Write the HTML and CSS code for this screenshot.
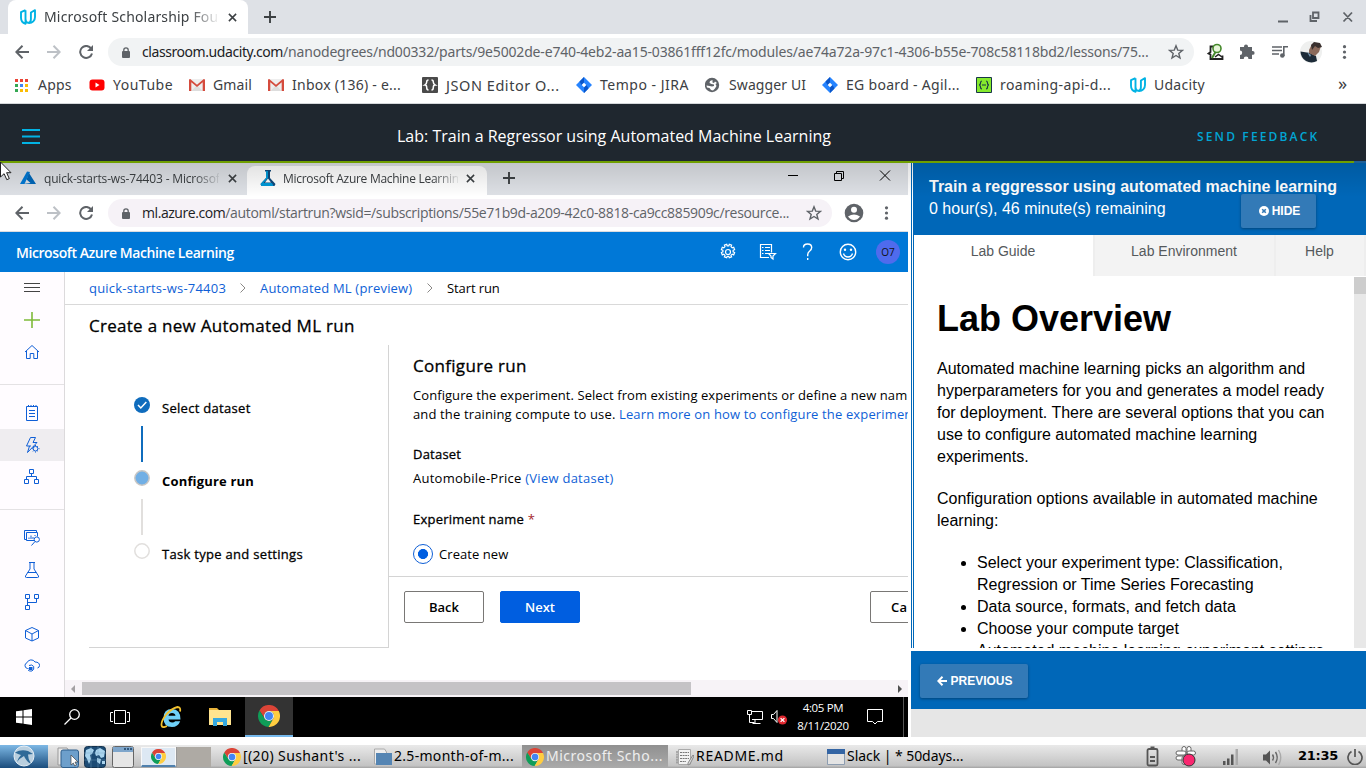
FILE: index.html
```html
<!DOCTYPE html>
<html lang="en">
<head>
<meta charset="utf-8">
<title>Microsoft Scholarship Foundation</title>
<link rel="stylesheet" href="styles.css">
</head>
<body>
<svg class="defs" width="0" height="0">
  <symbol id="chrome" viewBox="0 0 48 48"><path fill="#db4437" d="M24 13H45.4A24 24 0 0 0 3.2 12l11.3 17.5A11 11 0 0 1 24 13z"/><path fill="#0f9d58" d="M3.2 12A24 24 0 0 0 23 48l10.5-18.5a11 11 0 0 1-19 0z"/><path fill="#ffcd40" d="M45.4 13A24 24 0 0 1 23 48l10.5-18.5A11 11 0 0 0 24 13z"/><circle cx="24" cy="24" r="11" fill="#f1f1f1"/><circle cx="24" cy="24" r="8.7" fill="#4285f4"/></symbol>
  <symbol id="udacity" viewBox="0 0 16 16"><path fill="none" stroke="#02b3e4" stroke-width="1.9" stroke-linejoin="round" d="M5.500 1.200 1 3.200v5.600c0 3.200 1.300 5.100 4.500 6V1.200M5.500 9.500c0 3.300 1.600 4.500 3.600 4.500 3.300 0 5.900-2.500 5.900-6V1.200l-4.100 2.300v6.700c0 1.800-.8 3-2.200 3.600"/></symbol>
  <symbol id="gmail" viewBox="0 0 16 12"><path fill="#eee" d="M1 0h14v12H1z"/><path fill="#ddd" d="m2.500 12 5.500-6 5.500 6z"/><path fill="#d54b3d" d="M0 1Q0 0 1.200 0L8 5.700 14.800 0Q16 0 16 1v11h-2.300V3.200L8 8 2.300 3.200V12H0z"/></symbol>
  <symbol id="jira" viewBox="0 0 16 16"><path fill="#2684ff" d="m8 0 8 8-8 8-8-8z"/><path fill="#0b56c9" d="M8 0v5.500L5.500 8 3.500 4.500zM8 16v-5.500L10.500 8l2 3.500z"/><path fill="#fff" d="m8 5.700 2.300 2.300L8 10.300 5.700 8z"/></symbol>
  <symbol id="close" viewBox="0 0 10 10"><path fill="none" stroke="#3c4043" stroke-width="1.700" d="m1 1 8 8M9 1 1 9"/></symbol>
  <symbol id="plus" viewBox="0 0 12 12"><path stroke="#3c4043" stroke-width="1.900" d="M6 0v12M0 6h12"/></symbol>
  <symbol id="back" viewBox="0 0 14 14"><path fill="none" stroke="currentColor" stroke-width="2" d="M14 7H1.500M7.500.8 1.300 7l6.200 6.200"/></symbol>
  <symbol id="reload" viewBox="0 0 14 14"><path fill="none" stroke="#5f6368" stroke-width="2" d="M12.200 3.600A6 6 0 1 0 13 8.500"/><path fill="#5f6368" d="M14 0v6H8z"/></symbol>
  <symbol id="lock" viewBox="0 0 8 11"><rect y="4" width="8" height="7" rx="1" fill="#5f6368"/><path fill="none" stroke="#5f6368" stroke-width="1.300" d="M1.800 5V3a2.200 2.200 0 0 1 4.400 0v2"/></symbol>
  <symbol id="star" viewBox="0 0 16 16"><path fill="none" stroke="#5f6368" stroke-width="1.400" d="m8 1.800 1.700 4.300 4.700.3-3.600 3 1.200 4.600L8 11.500 4 14l1.200-4.600-3.600-3 4.700-.3z"/></symbol>
</svg>

<div class="tabstrip">
  <div class="tab"><svg class="i16"><use href="#udacity"/></svg><span class="tab-title">Microsoft Scholarship Fou</span><svg class="x"><use href="#close"/></svg></div>
  <svg class="plus"><use href="#plus"/></svg>
  <svg class="winctl" viewBox="0 0 80 20"><path fill="none" stroke="#5f6368" stroke-width="2" d="M1 14.500h10"/><path fill="none" stroke="#5f6368" stroke-width="1.800" d="M36 5.500h5.500V11H36zM33.500 8v6H40M66.500 5.500l8.500 9M75 5.500l-8.500 9"/></svg>
</div>
<div class="toolbar">
  <svg class="nav"><use href="#back"/></svg><svg class="nav fwd"><use href="#back"/></svg><svg class="nav"><use href="#reload"/></svg>
  <div class="omnibox"><svg class="lock"><use href="#lock"/></svg><span class="url"><b>classroom.udacity.com</b>/nanodegrees/nd00332/parts/9e5002de-e740-4eb2-aa15-03861fff12fc/modules/ae74a72a-97c1-4306-b55e-708c58118bd2/lessons/75...</span><svg class="i16"><use href="#star"/></svg></div>
  <svg class="exts" viewBox="0 0 150 24"><path fill="none" stroke="#222" stroke-width="1.800" d="M7.500 6.500h-3V12l-2 1.500 2 1V19h12v-3.500"/><circle cx="11" cy="8.500" r="4" fill="#e6f5d8" stroke="#45882b" stroke-width="1.600"/><path stroke="#45882b" stroke-width="2" d="m9.500 12-3.500 6"/><path fill="none" stroke="#222" stroke-width="1.500" d="m9 17 3.500-2.500 3.500 2.500"/><path fill="#5f6368" d="M35 7h3V6.500a2 2 0 0 1 4 0V7h4v4h.7a1.900 1.900 0 0 1 0 3.800H46V19h-3.500a2.400 2.400 0 0 0-4.800 0H34v-4a2.200 2.200 0 0 0 0-4.400V7z"/><path fill="none" stroke="#5f6368" stroke-width="1.600" d="M66 7h10M66 10.500h10M66 14h7M77.800 16V6.700H82"/><circle cx="76.300" cy="15.500" r="2.300" fill="#5f6368"/><circle cx="105" cy="12" r="11" fill="#eff0ef"/><path fill="#1d2b38" d="M94.500 11.500 104 13l6 3 1 5a11 11 0 0 1-16.500-9.500z"/><path fill="#8b6a5b" d="m103 10 3-6 6-1 3 3-2 6-4 4-6-3z"/><path fill="#39302e" d="m105 5 3-3 6 1 2 4-4 1-3-2-3 4z"/><path fill="#7898b0" d="m101 12 4 3-1 2z"/><g fill="#5f6368"><circle cx="138.500" cy="6.700" r="1.600"/><circle cx="138.500" cy="12" r="1.600"/><circle cx="138.500" cy="17.300" r="1.600"/></g></svg>
</div>
<div class="bookmarks">
  <div class="bm w1"><svg class="i16" viewBox="0 0 16 16"><path fill="#ea4335" d="M1 2h3v3H1zM6 2h3v3H6zM11 2h3v3h-3z"/><path fill="#34a853" d="M1 7h3v3H1zM1 12h3v3H1z"/><path fill="#4285f4" d="M6 7h3v3H6z"/><path fill="#fbbc05" d="M11 7h3v3h-3zM6 12h3v3H6zM11 12h3v3h-3z"/></svg>Apps</div>
  <div class="bm w2"><svg class="i16" viewBox="0 0 16 16"><rect y="2.500" x=".5" width="15" height="11" rx="3" fill="#f00"/><path fill="#fff" d="m6.500 5.500 4 2.500-4 2.500z"/></svg>YouTube</div>
  <div class="bm w3"><svg class="gm"><use href="#gmail"/></svg>Gmail</div>
  <div class="bm w4"><svg class="gm"><use href="#gmail"/></svg>Inbox (136) - e...</div>
  <div class="bm w5"><svg class="i16" viewBox="0 0 16 16"><rect width="16" height="16" rx="1" fill="#4a4a4a"/><path fill="none" stroke="#fff" stroke-width="1.500" d="M6.500 3Q4.700 3 4.700 5T3 8q1.700 0 1.700 2.500t1.800 2.500M9.500 3q1.800 0 1.800 2T13 8q-1.700 0-1.700 2.500T9.500 13"/></svg>JSON Editor O...</div>
  <div class="bm w6"><svg class="i16"><use href="#jira"/></svg>Tempo - JIRA</div>
  <div class="bm w7"><svg class="i16" viewBox="0 0 16 16"><circle cx="7" cy="8" r="7.200" fill="#5f6368"/><path fill="#fff" d="M7.500 3 5 4l-.5 2 2 1 2.500.5V9L7 9.500 4.500 9 1.500 8.500l.5 2 2.500.5 1.500 2 2 .5 2-2 1.500-2.500-1-2 1.500-1L10 4.500 9 6 7.500 5.500z"/></svg>Swagger UI</div>
  <div class="bm w8"><svg class="i16"><use href="#jira"/></svg>EG board - Agil...</div>
  <div class="bm w9"><svg class="i16" viewBox="0 0 16 16"><path fill="#85ea2d" stroke="#173647" d="M.5.500h15v15H.5z"/><path fill="none" stroke="#173647" stroke-width="1.200" d="M6 4Q4.500 4 4.500 6T3 8q1.500 0 1.500 2T6 12M10 4q1.500 0 1.500 2T13 8q-1.500 0-1.500 2T10 12M6 8h4"/></svg>roaming-api-d...</div>
  <div class="bm w10"><svg class="i16"><use href="#udacity"/></svg>Udacity</div>
  <span class="more">»</span>
</div>

<header class="classroom">
  <svg class="menu" viewBox="0 0 18 15"><path stroke="#02b3e4" stroke-width="2" d="M0 1h18M0 7.500h18M0 14h18"/></svg>
  <span class="lesson">Lab: Train a Regressor using Automated Machine Learning</span>
  <span class="feedback">SEND FEEDBACK</span>
</header>
<div class="progress"><i></i></div>

<div class="main">
  <section class="remote">
    <div class="r-tabs">
      <div class="r-tab off"><svg class="i16" viewBox="0 0 16 16"><path fill="#0078d4" d="M7 1.500 0 14h4.500L10 2z"/><path fill="#0067b8" d="M9 3 6.500 9.500l4 3.500L3 14h13z"/></svg><span class="t1">quick-starts-ws-74403 - Microsoft</span><svg class="x"><use href="#close"/></svg></div>
      <div class="r-tab on"><svg class="i16" viewBox="0 0 16 16"><path fill="#114a7c" d="M5 0h6v1.500h-1V8l5.500 6-1 2h-13l-1-2L6 8V1.500H5z"/><path fill="#0099d8" d="M6 1h2v7l-4.500 5H12l1.500 3h-12l-1-2L6 8z"/><path fill="#fff" d="m8 8.500 3 4H5z"/></svg><span class="t2">Microsoft Azure Machine Learnin</span><svg class="x"><use href="#close"/></svg></div>
      <svg class="plus"><use href="#plus"/></svg>
      <svg class="r-winctl" viewBox="0 0 110 16"><path fill="none" stroke="#000" d="M3 8.500h10M49.500 6.500h7v7h-7zM51.500 6V4.500h7v7H57M95 3.500l10 10M105 3.500l-10 10"/></svg>
    </div>
    <div class="r-toolbar">
      <svg class="nav"><use href="#back"/></svg><svg class="nav fwd"><use href="#back"/></svg><svg class="nav"><use href="#reload"/></svg>
      <div class="omnibox"><svg class="lock"><use href="#lock"/></svg><span class="url"><b>ml.azure.com</b>/automl/startrun?wsid=/subscriptions/55e71b9d-a209-42c0-8818-ca9cc885909c/resource...</span><svg class="i16"><use href="#star"/></svg></div>
      <svg class="r-user" viewBox="0 0 64 20"><circle cx="10" cy="10" r="9.300" fill="#5f6368"/><circle cx="10" cy="6.800" r="3" fill="#fff"/><path fill="#fff" d="M4 13.500q6-4 12 0-2.500 3.500-6 3.500t-6-3.500z"/><g fill="#5f6368"><circle cx="42.500" cy="4.800" r="1.600"/><circle cx="42.500" cy="10" r="1.600"/><circle cx="42.500" cy="15.200" r="1.600"/></g></svg>
    </div>
    <div class="azure">
      <span class="brand">Microsoft Azure Machine Learning</span>
      <svg class="az-icons" viewBox="0 0 150 20"><g fill="none" stroke="#fff" stroke-width="1.200"><circle cx="11" cy="10" r="2.500"/><path d="m9.700 2.300.5 1.500h1.600l.5-1.500 2.300.9-.6 1.500 1.200 1.200 1.500-.6.9 2.300-1.500.7v1.600l1.500.6-.9 2.400-1.500-.7-1.200 1.200.6 1.500-2.300.9-.5-1.500h-1.600l-.5 1.500-2.300-.9.6-1.500-1.200-1.200-1.500.7-.9-2.400 1.500-.6V8.300l-1.500-.7.9-2.300 1.500.6L8 4.700l-.6-1.500z"/><path d="M52 15.500h-8.500v-13h11v8M48 5.500h5M48 8.500h5M48 11.500h4M45 5.500h1.500M45 8.500h1.500M45 11.500h1.500M51.500 11.500h7L56 14v3l-2-1.500V14z"/><path stroke-width="1.400" d="M86.500 5.500q0-3.500 4-3.500 4.200 0 4.200 3.600 0 1.800-2 3.400-2 1.500-2 3.800v1.400M90.700 16v2"/><circle cx="131" cy="10" r="7.700" stroke-width="1.400"/><path stroke-width="1.300" d="M126.500 11.500q1 3.500 4.500 3.500t4.500-3.500"/></g><circle cx="128" cy="7.800" r="1.200" fill="#fff"/><circle cx="134" cy="7.800" r="1.200" fill="#fff"/></svg>
      <span class="avatar">O7</span>
    </div>
    <div class="r-body">
      <nav class="side">
        <div class="group g1">
          <svg viewBox="0 0 16 16"><path stroke="#444" d="M0 3.500h16M0 7.500h16M0 11.500h16"/></svg>
          <svg viewBox="0 0 16 16"><path stroke="#7fba3a" stroke-width="1.600" d="M8 0v16M0 8h16"/></svg>
          <svg viewBox="0 0 16 16"><path d="m1 8 7-6.500L15 8M2.500 7v7.500h3.700v-5h3.600v5h3.700V7"/></svg>
        </div>
        <div class="group g2">
          <svg viewBox="0 0 16 16"><path d="M2.500 1.500h11v14h-11zM5 5.500h6M5 8.500h6M5 11.500h6M4.500 0v2M7 0v2M9.500 0v2M12 0v2"/></svg>
          <svg class="sel" viewBox="0 0 16 16"><path d="M7 9H2.500L6.500.500h5L9 5.500h4L3.500 15.500 5.500 9"/><circle cx="11.500" cy="11.700" r="2.300" fill="#efedf0"/><path d="M11.500 8v1M11.500 14.500v1M7.800 11.700h1M14.500 11.700h1M9 9l.8.8M14 9l-.8.8M9 14.400l.8-.8M14 14.400l-.8-.8"/></svg>
          <svg viewBox="0 0 16 16"><path d="M5.500.500h4v4h-4zM.5 10.500h4v4h-4zM10.500 10.500h4v4h-4zM7.500 4.500v3M2.500 10.500v-3h10v3"/></svg>
        </div>
        <div class="group g3">
          <svg viewBox="0 0 16 16"><path d="M2.500 9.500h-2v-9h12v2M10 10.500H2.500v-8h11v4M5 9V7.500M7 9V5.500M9 9V7M11 6V5"/><circle cx="12.800" cy="9.500" r="2.600"/><path d="m11 11.500-3.500 4"/></svg>
          <svg viewBox="0 0 16 16"><path d="M5 .500h6M6 .500V7l-4.500 7q-.5 1.500 1 1.500h11q1.500 0 1-1.500L10 7V.500M3.500 10.500h9"/></svg>
          <svg viewBox="0 0 16 16"><path d="M1.500.500h4v4h-4zM10.500.500h4v4h-4zM1.500 11.500h4v4h-4zM3.500 4.500v7M3.500 8.500h9v-4"/></svg>
          <svg viewBox="0 0 16 16"><path d="m8 1.500 6.500 3v7.500L8 15l-6.500-3V4.500zM1.500 4.500 8 8l6.500-3.500M8 8v7"/></svg>
          <svg viewBox="0 0 16 16"><path d="M4.500 10.500h-1A3 3 0 0 1 3 4.700 4.500 4.500 0 0 1 11 4q4.500 0 4.500 3.500 0 2-2 2.500M5 7.500Q8 6 9.700 8.500 10.500 11.500 8 13q-2.500.500-4-1"/><path fill="#0f5fd6" stroke="none" d="M5 9h3.500v3H5z"/></svg>
        </div>
      </nav>
      <div class="page">
        <div class="crumbs"><a>quick-starts-ws-74403</a><svg class="chev" viewBox="0 0 6 10"><path fill="none" stroke="#8a8886" d="m.5.500 4.500 4.500-4.500 4.500"/></svg><a class="c2">Automated ML (preview)</a><svg class="chev" viewBox="0 0 6 10"><path fill="none" stroke="#8a8886" d="m.5.500 4.500 4.500-4.500 4.500"/></svg><span>Start run</span></div>
        <h1>Create a new Automated ML run</h1>
        <div class="wizard">
          <div class="steps">
            <div class="step"><svg viewBox="0 0 16 16"><circle cx="8" cy="8" r="8" fill="#0f6cbd"/><path fill="none" stroke="#fff" stroke-width="1.500" d="m4 8 2.800 3 5.500-6"/></svg><span>Select dataset</span></div>
            <div class="bar done"></div>
            <div class="step s2"><svg viewBox="0 0 16 16"><circle cx="8" cy="8" r="7.200" fill="#71afe5" stroke="#c8c6c4" stroke-width="1.500"/></svg><span>Configure run</span></div>
            <div class="bar"></div>
            <div class="step s3"><svg viewBox="0 0 16 16"><circle cx="8" cy="8" r="7.200" fill="#fff" stroke="#e1dfdd" stroke-width="1.500"/></svg><span>Task type and settings</span></div>
          </div>
          <div class="form">
            <div class="fields">
              <h2>Configure run</h2>
              <p class="l1">Configure the experiment. Select from existing experiments or define a new nam</p>
              <p class="l2">and the training compute to use. <a>Learn more on how to configure the experiment</a></p>
              <h3 class="ds">Dataset</h3>
              <p class="view">Automobile-Price <a>(View dataset)</a></p>
              <h3 class="en">Experiment name <em>*</em></h3>
              <div class="radio"><i></i><span>Create new</span></div>
            </div>
            <div class="actions"><span class="btn">Back</span><span class="btn primary">Next</span><span class="btn cancel">Cancel</span></div>
          </div>
        </div>
        <div class="hscroll"><svg viewBox="0 0 6 8"><path fill="#a3a0a3" d="M5 0v8L1 4z"/></svg><i></i><svg class="ra" viewBox="0 0 6 8"><path fill="#505050" d="M1 0v8l4-4z"/></svg></div>
      </div>
    </div>
    <div class="win">
      <svg class="start" viewBox="0 0 16 16"><path fill="#fff" d="M0 2.300 6.500 1.400v6.100H0zM7.500 1.200 16 0v7.500H7.500zM0 8.500h6.500v6.100L0 13.700zM7.500 8.500H16V16l-8.500-1.200z"/></svg>
      <svg class="find" viewBox="0 0 16 16"><circle cx="10.500" cy="5.500" r="4.800" fill="none" stroke="#fff" stroke-width="1.300"/><path stroke="#fff" stroke-width="1.300" d="M7 9 .5 15.500"/></svg>
      <svg class="tv" viewBox="0 0 20 14"><path fill="none" stroke="#fff" d="M4.500.500h11v13h-11zM3 2.500H.5v9H3M17 2.500h2.500v9H17"/></svg>
      <svg class="ie" viewBox="0 0 22 22"><path fill="#6fd0f7" fill-rule="evenodd" d="M20.500 13.500H8.500q.5 3 3.700 3 2 0 3-1.300h5Q18 21 12 21 3.500 21 3.500 12 3.500 3 12 3t8.500 10.500zM8.500 9.800h7Q15 7 12 7T8.500 9.800z"/><path fill="none" stroke="#f2c12e" stroke-width="1.800" d="M20 5.500Q21 1 17.500 1 11 2.500 5.500 9.500 0 17 2 20.500q1.500 1.500 5-.5"/></svg>
      <svg class="folder" viewBox="0 0 22 18"><path fill="#e8b33a" d="M0 0h8l2 2H0z"/><path fill="#ffe48f" d="M0 2h22v15H0z"/><path fill="#35a8e0" d="M4 10h14v8h-4v-4H8v4H4z"/></svg>
      <div class="wapp"><svg class="i22"><use href="#chrome"/></svg></div>
      <svg class="wtray" viewBox="0 0 42 16"><path fill="none" stroke="#fff" d="M5 2.500h10.500v8H5M8 10.500v4M5.500 14.500h8M.5 1.500h4v4h-4zM2.500 6v7.500h5M24.500 5.500h2l3.500-4v12l-3.500-4h-2z"/><circle cx="35.500" cy="11" r="4.600" fill="#e0272f"/><path stroke="#fff" stroke-width="1.300" d="m33.600 9.100 3.800 3.800M37.400 9.100l-3.800 3.800"/></svg>
      <div class="clock"><span>4:05 PM</span><span>8/11/2020</span></div>
      <svg class="note" viewBox="0 0 16 16"><path fill="none" stroke="#fff" d="M.5.500h15v12h-5L8 15l-2.500-2.500h-5z"/></svg>
      <i class="desk"></i>
    </div>
  </section>

  <aside class="lab">
    <div class="lab-frame">
      <div class="lab-head">
        <strong>Train a reggressor using automated machine learning</strong>
        <div class="lab-sub"><span>0 hour(s), 46 minute(s) remaining</span><span class="lbtn hide"><svg viewBox="0 0 10 10"><circle cx="5" cy="5" r="5" fill="#fff"/><path stroke="#337ab7" stroke-width="1.600" d="m3.200 3.200 3.600 3.600M6.800 3.200 3.200 6.800"/></svg>HIDE</span></div>
      </div>
      <div class="lab-tabs"><span class="cur">Lab Guide</span><span class="env">Lab Environment</span><span class="help">Help</span><span class="rest"></span></div>
      <div class="lab-scroll">
        <div class="doc">
          <h4>Lab Overview</h4>
          <p>Automated machine learning picks an algorithm and<br>hyperparameters for you and generates a model ready<br>for deployment. There are several options that you can<br>use to configure automated machine learning<br>experiments.</p>
          <p>Configuration options available in automated machine<br>learning:</p>
          <ul><li>Select your experiment type: Classification,<br>Regression or Time Series Forecasting</li><li>Data source, formats, and fetch data</li><li>Choose your compute target</li><li>Automated machine learning experiment settings</li></ul>
        </div>
        <div class="vscroll"><i></i></div>
      </div>
    </div>
    <div class="lab-foot"><span class="lbtn prev"><svg viewBox="0 0 10 10"><path fill="none" stroke="#fff" stroke-width="2" d="M10 5H1.500M5.500.800 1.300 5l4.200 4.200"/></svg>PREVIOUS</span></div>
  </aside>
  <svg class="cursor" viewBox="0 0 12 20"><path fill="#fff" stroke="#222" d="M.5 0v15l3.600-3.300 2.700 6 2.500-1.100-2.700-5.900H11z"/></svg>
</div>

<footer class="panel">
  <div class="lx"><svg viewBox="0 0 22 22"><circle cx="11" cy="11" r="10" fill="#b9cfdf" stroke="#e5eef5"/><path fill="#2f6a98" d="M2 7.500Q8 4 15 6l5 3-5 .5q0 5 3 9.500-5-3-7-8Q7 13 4 17q1-4 4-7-3-1-6-2.500z"/></svg></div>
  <svg class="pi p1" viewBox="0 0 22 22"><path fill="#e8e8e8" stroke="#999" d="M1 2h9l2 3h5v14H1z"/><rect x="4" y="4" width="17.500" height="17.500" rx="2" fill="#6d9fcb" stroke="#2f5f8c"/><path fill="#fff" stroke="#444" stroke-width=".7" d="M14 9v10l2.300-2 1.500 3 1.700-1-1.500-3h3z"/></svg>
  <svg class="pi p2" viewBox="0 0 22 22"><rect x=".5" y=".5" width="21" height="21" rx="3" fill="#1c4b74" stroke="#14334f"/><path fill="#a9d4ee" d="m2 4 5-2 3 2-2 4-2 1 1 4-2 5-2-5-2-3zM12 4l4-2 5 3-1 6-3 1-2-3-3 1-1-3zM13 12l4 1-1 5-3-2zM18 15h3v3h-3z"/><path stroke="#7ba5c2" stroke-width=".4" d="M0 7h22M0 14h22M7 0v22M14 0v22"/></svg>
  <svg class="pi p3" viewBox="0 0 22 22"><rect x=".5" y=".5" width="21" height="21" rx="2" fill="#e6e6e6" stroke="#666"/><path fill="#7fa6cb" d="M1 1h20v5H1z"/><path fill="#31587d" d="M12 2h2v2h-2zM15 2h2v2h-2zM18 2h2v2h-2z"/></svg>
  <div class="pager"><div class="pg a"><svg class="i15"><use href="#chrome"/></svg></div><div class="pg b"></div></div>
  <div class="task k1"><svg class="i18"><use href="#chrome"/></svg><span>[(20) Sushant's ...</span></div>
  <div class="task k2"><svg class="i18" viewBox="0 0 18 18"><path fill="#eee" stroke="#aaa" d="M.5 1h10l2 3v12H.5z"/><path fill="#5585b3" d="M2 5h16v12H2z"/></svg><span>2.5-month-of-m...</span></div>
  <div class="task k3"><svg class="i18"><use href="#chrome"/></svg><span>Microsoft Scho...</span></div>
  <div class="task k4"><svg class="i18" viewBox="0 0 18 18"><path fill="#f2f2f2" stroke="#aaa" d="M2.500 1.500h12v15h-12z"/><path stroke="#777" stroke-width="1" d="M4 4.500h9M4 7.500h9M4 10.500h9M4 13.500h6M1 3v13" stroke-dasharray="2 .6"/><path fill="#ddd" stroke="#888" d="m17 7-5 8v2l2-1 4-8z"/></svg><span>README.md</span></div>
  <div class="task k5"><svg class="i18" viewBox="0 0 18 18"><path fill="#e4e4e4" stroke="#8d9db0" d="M.5 1.500h17v15H.500z"/><path fill="#3465a4" d="M0 1h18v5H0z"/></svg><span>Slack | * 50days...</span></div>
  <svg class="tray" viewBox="0 0 140 23"><g fill="none" stroke="#555" stroke-width="1.800"><rect x="2.500" y="4" width="10" height="16.500" rx="1.500"/><path d="M5.500 2.500h4M5 12h5M5 16h5"/></g><g fill="#fff" stroke="#666"><rect x="37" y="1.500" width="4" height="8.500" rx="2"/><rect x="31" y="6" width="10" height="4" rx="2"/><rect x="42" y="1.500" width="4" height="8.500" rx="2"/><rect x="42" y="6" width="8.500" height="4" rx="2"/><rect x="31" y="11" width="9" height="4" rx="2"/><rect x="37" y="11" width="4" height="8.500" rx="2"/></g><circle cx="44" cy="15" r="6" fill="#f9276f" stroke="#333"/><g fill="#555"><path d="M78 16h2.500v4H78zM82 13.500h2.500V20H82zM86 9.500h2.500V20H86z"/><path fill="#aaa" d="M90.500 4H93v16h-2.500z"/></g><path fill="#555" d="M118 9.500h3l4-4v14l-4-4h-3z"/><path fill="none" stroke="#666" stroke-width="1.400" d="M127.500 9.500q2 3 0 6M130.500 7q3.500 5.500 0 11"/><path fill="none" stroke="#aaa" stroke-width="1.400" d="M133.500 5q4.500 7.500 0 15"/></svg>
  <span class="time">21:35</span>
  <svg class="power" viewBox="0 0 16 16"><path fill="none" stroke="#555" stroke-width="1.700" d="M4.500 2.500a7 7 0 1 0 7 0M8 0v8"/></svg>
</footer>
</body>
</html>
```
FILE: styles.css
```css
* { box-sizing: border-box; }
body { margin: 0; width: 1366px; height: 768px; overflow: hidden; display: flex; flex-direction: column; background: #fff; font-family: "Noto Sans", sans-serif; color: #3c4043; white-space: nowrap; }
svg { display: block; flex: none; }
h1, h2, h3, h4, p, ul { margin: 0; }
.defs { position: absolute; }
.i16 { width: 16px; height: 16px; }
.i22 { width: 22px; height: 22px; }
.i18 { width: 18px; height: 18px; }
.i15 { width: 15px; height: 15px; }
.x { width: 9px; height: 9px; }
.plus { width: 12px; height: 12px; }

/* outer browser */
.tabstrip { height: 34px; flex: none; background: #dee1e6; display: flex; align-items: center; padding-left: 8px; }
.tab { width: 240px; height: 34px; background: #fff; border-radius: 8px 8px 0 0; display: flex; align-items: center; padding-left: 12px; }
.tab-title { width: 175px; margin: 0 9px 0 8px; overflow: hidden; font-size: 14px; letter-spacing: .17px; line-height: 34px; -webkit-mask-image: linear-gradient(90deg, #000 145px, transparent 176px); }
.tabstrip > .plus { margin-left: 16px; }
.winctl { width: 80px; height: 20px; margin-left: 1001px; }
.toolbar { height: 36px; flex: none; display: flex; align-items: center; padding-left: 15px; }
.nav { width: 14px; height: 14px; margin-right: 18px; color: #5f6368; }
.nav.fwd { transform: scaleX(-1); color: #bdc1c6; }
.omnibox { width: 1086px; height: 28px; margin-left: -3px; border-radius: 14px; background: #f1f3f4; display: flex; align-items: center; padding-left: 14px; }
.lock { width: 8px; height: 11px; }
.url { width: 1012px; margin: -1px 14px 0 12px; font-size: 14px; letter-spacing: -.17px; color: #5f6368; }
.url b { font-weight: 400; color: #202124; letter-spacing: -.43px; }
.exts { width: 150px; height: 24px; margin-left: 12px; }
.bookmarks { height: 34px; flex: none; border-bottom: 1px solid #d5d8db; display: flex; align-items: center; padding: 0 0 4px 14px; font-size: 14px; letter-spacing: .1px; }
.bm { display: flex; align-items: center; gap: 8px; line-height: 30px; }
.gm { width: 16px; height: 12px; }
.w1 { width: 75px; letter-spacing: .2px; } .w2 { width: 100px; letter-spacing: .5px; } .w3 { width: 79px; } .w4 { width: 154px; letter-spacing: .25px; } .w5 { width: 154px; font-size: 14.500px; letter-spacing: .55px; }
.w6 { width: 129px; letter-spacing: .5px; } .w7 { width: 117px; } .w8 { width: 154px; letter-spacing: .3px; } .w9 { width: 154px; letter-spacing: .4px; } .w10 { width: 208px; letter-spacing: .25px; }
.more { font-size: 18px; line-height: 24px; margin-top: -4px; }

/* classroom bar */
.classroom { height: 57px; flex: none; background: #1f272f; display: flex; align-items: center; padding: 7px 0 0 22px; color: #fff; font-family: "Open Sans", sans-serif; }
.menu { width: 18px; height: 15px; }
.lesson { width: 800px; margin-left: 357px; font-size: 16px; letter-spacing: 0; }
.feedback { font-size: 12px; font-weight: 600; letter-spacing: 2.150px; color: #02a5d4; }
.progress { height: 2px; flex: none; background: #1f5f96; }
.progress i { display: block; width: 1354px; height: 2px; background: #6f9f00; }

.main { height: 574px; flex: none; display: flex; justify-content: space-between; position: relative; }
.main::before { content: ""; position: absolute; z-index: 2; inset: 0 0 auto 0; height: 34px; background: linear-gradient(rgba(0,0,0,.12), rgba(0,0,0,0)); }
.cursor { position: absolute; left: 0; top: -1px; width: 12px; height: 20px; z-index: 3; }

/* remote desktop */
.remote { width: 908px; display: flex; flex-direction: column; overflow: hidden; font-family: "Open Sans", sans-serif; color: #000; }
.r-tabs { height: 32px; flex: none; background: #dee1e6; display: flex; align-items: center; padding-top: 3px; }
.r-tab { height: 29px; display: flex; align-items: center; padding-bottom: 5px; font-size: 12px; color: #3c4043; }
.r-tab.off { width: 247px; padding-left: 20px; border-radius: 0 0 8px 0; }
.r-tab.on { width: 240px; padding-left: 13px; background: #fff; border-radius: 8px 8px 0 0; }
.t1, .t2 { overflow: hidden; width: 175px; letter-spacing: -.17px; -webkit-mask-image: linear-gradient(90deg, #000 150px, transparent 178px); }
.t1 { margin: 0 9px 0 8px; }
.t2 { margin: 0 8px 0 7px; letter-spacing: -.28px; }
.r-tabs .plus { margin: -5px 0 0 16px; }
.r-winctl { width: 110px; height: 16px; margin: -12px 0 0 270px; }
.r-toolbar { height: 37px; flex: none; border-bottom: 1px solid #dadce0; display: flex; align-items: center; padding-left: 15px; background: #fff; }
.r-toolbar .omnibox { width: 724px; background: #f6f2f7; }
.r-toolbar .url { width: 650px; font-size: 14px; letter-spacing: -.34px; }
.r-user { width: 64px; height: 20px; margin-left: 12px; }
.azure { height: 40px; flex: none; background: #0078d7; color: #fff; display: flex; align-items: center; padding-left: 16px; }
.brand { width: 701px; font-size: 14px; font-weight: 600; letter-spacing: -.42px; }
.az-icons { width: 150px; height: 20px; }
.avatar { width: 24px; height: 24px; margin-left: 9px; border-radius: 50%; background: #4f6bed; color: #111; font-size: 10px; line-height: 24px; text-align: center; }
.r-body { height: 425px; flex: none; display: flex; }
.side { width: 65px; background: #fffcff; border-right: 1px solid #dcdadc; }
.group { border-bottom: 1px solid #e4e2e4; }
.group svg { width: 64px; height: 32px; padding: 8px 24px; fill: none; stroke: #0f5fd6; stroke-width: 1; }
.g1 { height: 113px; }
.g2 { height: 125px; padding-top: 12px; }
.g3 { border: 0; padding-top: 12px; }
.group svg.sel { background: #efedf0; }
.page { width: 843px; display: flex; flex-direction: column; overflow: hidden; }
.crumbs { height: 33px; flex: none; border-bottom: 1px solid #d9d9d9; padding-left: 24px; display: flex; align-items: center; font-size: 13px; letter-spacing: -.1px; }
a { color: #0f5fd6; }
.crumbs a { width: 137px; letter-spacing: .22px; }
.crumbs .c2 { width: 153px; letter-spacing: .18px; }
.chev { width: 6px; height: 10px; margin: 0 14px; }
.page h1, .steps, .fields h2, .fields h3 { -webkit-text-stroke: .3px #000; }
.page h1 { margin: 7px 0 6px 24px; height: 27px; line-height: 27px; font-size: 17px; font-weight: 400; letter-spacing: .28px; flex: none; }
.wizard { height: 303px; flex: none; display: flex; padding-left: 24px; }
.steps { width: 300px; border: solid #d4d4d4; border-width: 0 1px 1px 0; padding: 52px 0 0 45px; font-size: 13px; letter-spacing: .3px; }
.step { height: 16px; display: flex; gap: 12px; }
.step span { line-height: 22px; }
.step svg { width: 16px; height: 16px; }
.s2 span { font-weight: 700; letter-spacing: .17px; -webkit-text-stroke: 0; }
.bar { width: 2px; height: 36px; margin: 13px 0 8px 7px; background: #e1dfdd; }
.bar.done { background: #0f6cbd; }
.form { width: 519px; }
.fields { height: 232px; border-bottom: 1px solid #d4d4d4; padding-left: 24px; font-size: 13px; }
.fields h2 { padding-top: 10px; height: 41px; line-height: 21px; font-size: 17px; font-weight: 400; letter-spacing: .3px; }
.fields p { line-height: 19px; letter-spacing: .14px; }
.fields .l1 { letter-spacing: .07px; }
.fields h3 { font-size: 13px; font-weight: 400; line-height: 20px; letter-spacing: .22px; }
.ds { padding-top: 20px; }
.fields .view { padding-top: 5px; line-height: 19px; letter-spacing: .26px; }
.en { padding-top: 21px; }
.en em { color: #a4262c; font-style: normal; -webkit-text-stroke: 0; }
.radio { display: flex; align-items: center; gap: 6px; padding-top: 15px; }
.radio i { width: 20px; height: 20px; border: 1px solid #0f5fd6; border-radius: 50%; background: radial-gradient(circle, #005ee0 4.700px, #fff 5.300px); }
.radio span { line-height: 20px; letter-spacing: .07px; }
.actions { display: flex; padding: 14px 0 0 15px; }
.btn { width: 80px; height: 32px; flex: none; border: 1px solid #797775; border-radius: 2px; margin-right: 16px; font-size: 13px; font-weight: 600; line-height: 30px; text-align: center; }
.btn.primary { background: #005ee0; border-color: #005ee0; color: #fff; }
.btn.cancel { margin-left: 274px; padding-left: 20px; text-align: left; letter-spacing: .3px; }
.hscroll { height: 17px; flex: none; margin-top: auto; background: #f7f3f7; display: flex; align-items: center; padding-left: 5px; }
.hscroll svg { width: 6px; height: 8px; }
.hscroll i { width: 609px; height: 13px; margin-left: 6px; background: #c5c3c6; }
.hscroll .ra { margin-left: 206px; }
.win { height: 40px; flex: none; background: #000; display: flex; align-items: center; color: #fff; }
.start { width: 16px; height: 16px; margin-left: 16px; }
.find { width: 16px; height: 16px; margin-left: 32px; }
.tv { width: 20px; height: 14px; margin-left: 30px; }
.ie { width: 22px; height: 22px; margin-left: 30px; }
.folder { width: 22px; height: 18px; margin-left: 27px; }
.wapp { width: 48px; height: 40px; margin-left: 14px; background: #333; border-bottom: 2px solid #76b9ed; display: flex; align-items: center; justify-content: center; }
.wtray { width: 42px; height: 16px; margin-left: 454px; }
.clock { width: 68px; display: flex; flex-direction: column; align-items: center; font-size: 11.500px; line-height: 18px; letter-spacing: -.35px; margin-top: -1px; }
.note { width: 16px; height: 16px; margin-left: 10px; }
.desk { width: 1px; height: 40px; margin-left: 20px; background: #555; }

/* lab guide panel */
.lab { width: 455px; display: flex; flex-direction: column; font-family: "Liberation Sans", Arial, sans-serif; }
.lab-frame { height: 485px; border-left: 3px double #0067b8; }
.lab-head { height: 72px; margin-left: -1px; background: #0067b8; color: #fff; font-size: 16px; line-height: 22px; padding: 13px 0 0 16px; }
.lab-head strong { display: block; }
.lab-sub { display: flex; height: 34px; }
.lab-sub > span:first-child { width: 312px; }
.lbtn { height: 34px; border-radius: 2px; background: #337ab7; box-shadow: 0 1px 3px rgba(0,0,0,.35); color: #fff; font-size: 12px; font-weight: 700; display: flex; align-items: center; justify-content: center; gap: 3px; }
.lbtn svg { width: 10px; height: 10px; }
.hide { width: 75px; margin-top: -4px; padding-left: 2px; }
.lab-tabs { height: 41px; display: flex; gap: 2px; background: #eee; font-size: 14px; line-height: 33px; color: #55595c; }
.lab-tabs span { background: #f3f3f3; text-align: center; }
.lab-tabs .cur { width: 179px; background: #fff; padding-right: 1px; }
.env { width: 179px; padding-right: 1px; }
.help { width: 88px; padding-right: 1px; }
.lab-tabs .rest { flex: 1; }
.lab-scroll { height: 372px; display: flex; overflow: hidden; color: #000; font-size: 16px; line-height: 22px; }
.doc { width: 440px; height: 372px; padding-left: 23px; overflow: hidden; }
.doc h4 { font-size: 36px; line-height: 40px; padding-top: 23px; height: 82px; }
.doc p { margin-bottom: 20px; }
.doc ul { padding-left: 40px; }
.vscroll { width: 12px; background: #e8e8e8; border-top: 1px solid #fff; }
.vscroll i { display: block; height: 17px; background: #cdcdcd; }
.lab-foot { height: 58px; margin-top: 3px; background: #0067b8; padding: 13px 0 0 9px; }
.prev { width: 108px; padding-left: 2px; }
.lab::after { content: ""; height: 28px; background: #e6e6e6; }

/* host taskbar */
.panel { height: 23px; margin-top: 8px; flex: none; background: linear-gradient(#e9e9e9, #c3c3c3 90%, #a2a2a2); display: flex; align-items: center; color: #000; font-size: 14px; }
.lx { width: 48px; height: 23px; background: linear-gradient(#7db8e5, #1a4c7c); padding-left: 13px; }
.lx svg { width: 22px; height: 22px; }
.pi { width: 22px; height: 22px; }
.p1 { margin-left: 9px; } .p2 { margin-left: 5px; } .p3 { margin-left: 6px; }
.pager { display: flex; margin-left: 7px; }
.pg { width: 35px; height: 20px; }
.pg.a { background: #dde8f3; border: 1px solid #f8f8f8; border-bottom: 2px solid #4f80ad; padding: 1px 9px; }
.pg.b { background: #aeaaa4; border-left: 1px solid #999; }
.task { display: flex; align-items: center; gap: 2px; height: 23px; line-height: 20px; letter-spacing: .4px; }
.task span { margin-top: -2px; }
.k1 { width: 151px; margin-left: 12px; }
.k2 { width: 148px; letter-spacing: .3px; }
.k3 { width: 146px; padding-left: 4px; background: linear-gradient(#909090, #aaa); color: #eee; letter-spacing: .5px; }
.k4 { width: 159px; padding-left: 8px; letter-spacing: .7px; }
.k5 { width: 318px; letter-spacing: -.05px; }
.tray { width: 140px; height: 23px; }
.time { width: 41px; margin: -2px 0 0 13px; font-family: "DejaVu Sans", sans-serif; font-weight: 700; font-size: 13px; letter-spacing: -.3px; }
.power { width: 16px; height: 16px; margin-left: 8px; }
```
